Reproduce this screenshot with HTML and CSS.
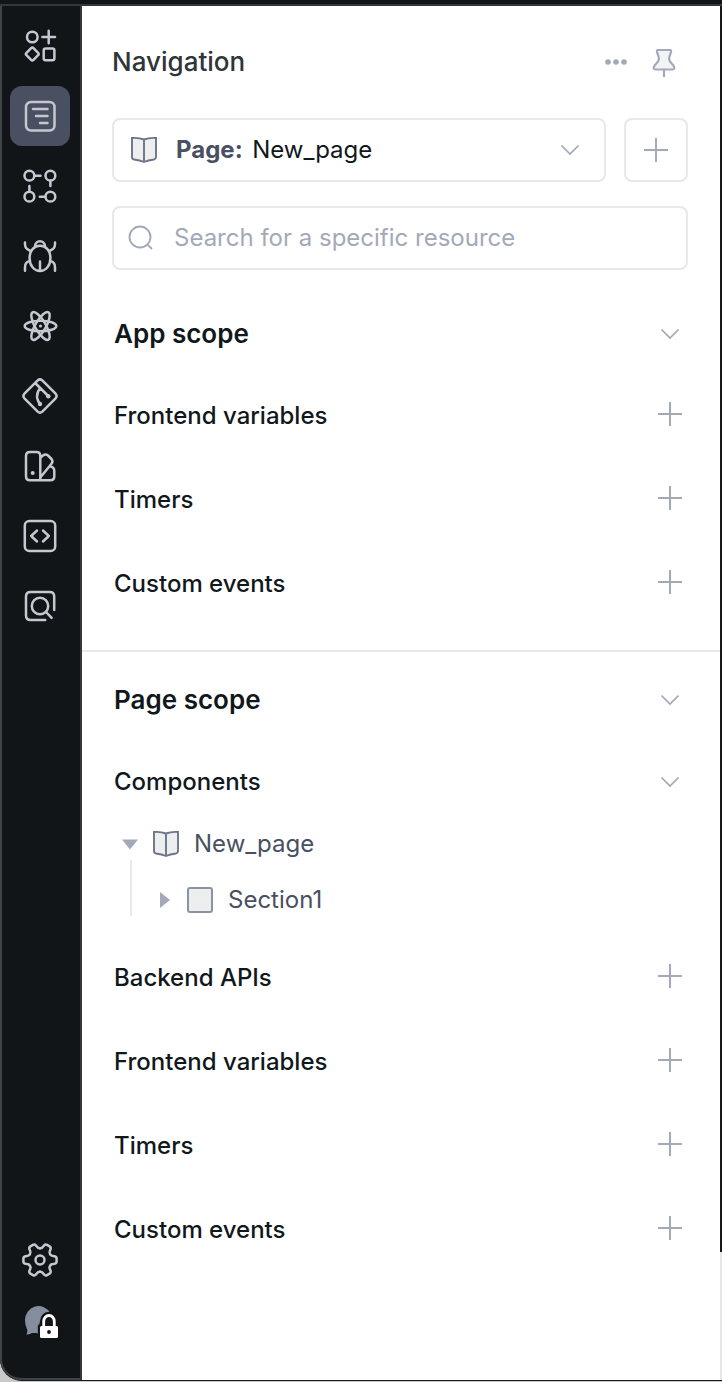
FILE: index.html
```html
<!DOCTYPE html>
<html lang="en">
<head>
<meta charset="utf-8">
<title>Navigation</title>
<link rel="stylesheet" href="styles.css">
</head>
<body>
<svg class="defs" aria-hidden="true">
  <symbol id="plus" viewBox="0 0 24 24"><path d="M12 0V24M0 12H24"/></symbol>
  <symbol id="chevron" viewBox="0 0 24 24"><path d="M3.500 7.500L12 16L20.500 7.500"/></symbol>
  <symbol id="book" viewBox="0 0 28 28"><path d="M2 2Q9 1.500 14 3.500Q19 1.500 26 2V21Q26 23 24 23.500Q18 24.200 14 26Q10 24.200 4 23.500Q2 23 2 21ZM14 3.500V26"/></symbol>
  <symbol id="tooth" viewBox="0 0 36 36" overflow="visible"><path d="M28.100 12.200Q29 14 31 14L32.500 14.200Q34.600 14.700 34.600 16.500V19.500Q34.600 21.300 32.500 21.800L31 22Q29 22 28.100 23.800"/></symbol>
</svg>
<div class="app">
  <div class="topbar"></div>
  <div class="main">
    <nav class="rail">
      <a class="tool"><svg class="icon" viewBox="0 0 36 36"><circle cx="10.300" cy="9" r="5.300"/><path d="M26.700 2.700V15.300M20.400 9H33"/><path d="M9.100 20.200Q10.300 19 11.500 20.200L16.100 24.800Q17.300 26 16.100 27.200L11.500 31.800Q10.300 33 9.100 31.800L4.500 27.200Q3.300 26 4.500 24.800Z"/><rect x="21.700" y="20.500" width="10.700" height="11.700" rx="2"/></svg></a>
      <a class="tool active"><svg class="icon" viewBox="0 0 36 36"><rect x="4" y="4" width="28.500" height="28.500" rx="5"/><path d="M11 11H25.500M14 18H25.500M18 25H25.500"/></svg></a>
      <a class="tool"><svg class="icon" viewBox="0 0 36 36"><circle cx="7.400" cy="7.700" r="4.900"/><circle cx="28.400" cy="7.700" r="4.900"/><circle cx="7.400" cy="28.700" r="4.900"/><circle cx="28.400" cy="28.700" r="4.900"/><path d="M12.500 7.700H18.500M28.400 12.700V18M7.400 23.500V18M23.300 28.700H17.800"/></svg></a>
      <a class="tool"><svg class="icon" viewBox="0 0 36 36"><path d="M18 7.800C24 7.800 28.400 12.500 28.400 20S24 33 18 33S7.600 27.500 7.600 20S12 7.800 18 7.800ZM13 8.500C13 1.500 23 1.500 23 8.500M18 23.500V33M3 4.500V6.500Q3 11 8.800 13M33 4.500V6.500Q33 11 27.200 13M3 32.800V29Q3 24 7.800 23M33 32.800V29Q33 24 28.200 23"/></svg></a>
      <a class="tool"><svg class="icon" viewBox="0 0 36 36"><ellipse cx="18.500" cy="18" rx="15.800" ry="5.300"/><ellipse cx="18.500" cy="18" rx="15.800" ry="5.300" transform="rotate(60 18.500 18)"/><ellipse cx="18.500" cy="18" rx="15.800" ry="5.300" transform="rotate(120 18.500 18)"/><circle class="dot" cx="18.500" cy="18" r="1.600"/></svg></a>
      <a class="tool"><svg class="icon" viewBox="0 0 36 36"><path d="M15.700 2.400Q18 .4 20.300 2.400L33.600 15.700Q35.600 18 33.600 20.300L20.300 33.600Q18 35.600 15.700 33.600L2.400 20.300Q.4 18 2.400 15.700ZM13.200 5L26.200 18M18.200 10Q14.500 14.500 15.200 20Q15.700 23 18 26"/><circle class="dot" cx="26.300" cy="18.200" r="2.200"/><circle class="dot" cx="18" cy="26" r="2.200"/></svg></a>
      <a class="tool"><svg class="icon" viewBox="0 0 36 36"><path d="M8 4H14.500Q18.300 4 18.300 8V32.200H8Q4 32.200 4 28.200V8Q4 4 8 4ZM18.300 9.800L21 7.500Q23.500 5.500 26 7.500L29.500 11Q31.500 13.500 29.300 16L18.300 29.500M28 18.500Q32.300 18.800 32.300 23V28.200Q32.300 32.200 28.300 32.200H18"/><circle class="dot" cx="10.700" cy="25" r="2"/></svg></a>
      <a class="tool"><svg class="icon" viewBox="0 0 36 36"><rect x="2.800" y="3" width="30.400" height="30" rx="4.500"/><path d="M15 12.500L9.200 18L15 23.500M21 12.500L26.800 18L21 23.500"/></svg></a>
      <a class="tool"><svg class="icon" viewBox="0 0 36 36"><path d="M32.200 22V8.500Q32.200 4 27.700 4H8.500Q4 4 4 8.500V27.500Q4 32 8.500 32H23.200M24 24L29.600 29.800"/><circle cx="18" cy="18" r="8.200"/></svg></a>
      <div class="rail-end">
        <a class="tool"><svg class="icon" viewBox="0 0 36 36"><use href="#tooth"/><use href="#tooth" transform="rotate(60 18 18)"/><use href="#tooth" transform="rotate(120 18 18)"/><use href="#tooth" transform="rotate(180 18 18)"/><use href="#tooth" transform="rotate(240 18 18)"/><use href="#tooth" transform="rotate(300 18 18)"/><circle cx="18" cy="18" r="4.500"/></svg></a>
        <a class="tool"><svg class="chat" viewBox="0 0 36 36"><path class="bubble" d="M4.500 30.300Q5.500 28 5.300 26Q3 21.500 3 16.500A13.600 14 0 0 1 28.500 9.300L29 17L19 21L18 24V29Q16.500 30.500 14.500 29H10Q7 31 4.500 30.300Z"/><path class="gap" d="M15.800 36V21.500Q18 20.500 18 17A8.500 9 0 0 1 35.500 17V21Z"/><rect class="lock" x="18" y="22" width="18" height="12" rx="1.500"/><path class="shackle" d="M21.700 22.500V17.500A5.300 6 0 0 1 32.300 17.500V22.500"/><circle class="hole" cx="27" cy="28" r="1.900"/></svg></a>
      </div>
    </nav>
    <section class="panel">
      <header class="head">
        <h1>Navigation</h1>
        <svg class="more" viewBox="0 0 24 8"><circle cx="4" cy="4" r="2.800"/><circle cx="12" cy="4" r="2.800"/><circle cx="20" cy="4" r="2.800"/></svg>
        <svg class="pin" viewBox="0 0 28 32"><path d="M8 4H20Q21.500 4 21 6L19.500 10.500Q18.300 13 20 15.500L23.500 19.500Q25.500 23.500 22.500 23.500H5.500Q2.500 23.500 4.500 19.500L8 15.500Q9.700 13 8.500 10.500L7 6Q6.500 4 8 4ZM14 24V31"/></svg>
      </header>
      <div class="pages">
        <div class="select"><svg class="book"><use href="#book"/></svg><b>Page:</b><span>New_page</span><svg class="act chevron"><use href="#chevron"/></svg></div>
        <div class="add"><svg class="act"><use href="#plus"/></svg></div>
      </div>
      <div class="search"><svg class="glass" viewBox="0 0 26 26"><circle cx="12" cy="12" r="10.500"/><path d="M19.800 19.800L24 24"/></svg><span>Search for a specific resource</span></div>
      <div class="scope app-scope">
        <div class="row title"><h2>App scope</h2><svg class="act chevron"><use href="#chevron"/></svg></div>
        <div class="row"><h3>Frontend variables</h3><svg class="act"><use href="#plus"/></svg></div>
        <div class="row"><h3>Timers</h3><svg class="act"><use href="#plus"/></svg></div>
        <div class="row"><h3>Custom events</h3><svg class="act"><use href="#plus"/></svg></div>
      </div>
      <div class="scope page-scope">
        <div class="row title"><h2>Page scope</h2><svg class="act chevron"><use href="#chevron"/></svg></div>
        <div class="row components"><h3>Components</h3><svg class="act chevron"><use href="#chevron"/></svg></div>
        <div class="tree">
          <div class="node"><svg class="caret" viewBox="0 0 16 16"><path d="M0 3.500H16L8 13.500Z"/></svg><svg class="book"><use href="#book"/></svg><span>New_page</span></div>
          <div class="branch"><div class="node"><svg class="caret" viewBox="0 0 16 16"><path d="M4 0V16L14 8Z"/></svg><i class="box"></i><span>Section1</span></div></div>
        </div>
        <div class="row"><h3>Backend APIs</h3><svg class="act"><use href="#plus"/></svg></div>
        <div class="row"><h3>Frontend variables</h3><svg class="act"><use href="#plus"/></svg></div>
        <div class="row"><h3>Timers</h3><svg class="act"><use href="#plus"/></svg></div>
        <div class="row"><h3>Custom events</h3><svg class="act"><use href="#plus"/></svg></div>
      </div>
    </section>
    <div class="canvas-edge"><div class="canvas-dark"></div></div>
  </div>
</div>
</body>
</html>
```
FILE: styles.css
```css
* { box-sizing: border-box; }
body { margin: 0; background: #c9c9ca; font-family: Inter, sans-serif; font-size: 24px; }
h1, h2, h3 { margin: 0; white-space: nowrap; }
svg { display: block; flex: none; fill: none; }
.defs { position: absolute; width: 0; height: 0; }
.app { height: 1381px; display: flex; flex-direction: column; background: #111517; border-bottom: 1px solid #17191b; border-bottom-left-radius: 22px; overflow: hidden; }
.topbar { height: 6px; border-bottom: 2px solid #343739; flex: none; }
.main { display: flex; flex: 1; min-height: 0; }
.rail { width: 82px; border-left: 2px solid #414446; border-right: 2px solid #34383a; border-bottom: 2px solid #414446; border-bottom-left-radius: 21px; padding: 10px 10px 0 8px; display: flex; flex-direction: column; gap: 10px; }
.tool { width: 60px; height: 60px; flex: none; display: flex; align-items: center; justify-content: center; border-radius: 12px; }
.active { background: #495062; }
.icon { width: 36px; height: 36px; stroke: #c5c8d1; stroke-width: 2.500; stroke-linecap: round; stroke-linejoin: round; }
.icon .dot { fill: #c5c8d1; stroke: none; }
.rail-end { margin-top: auto; padding-bottom: 26px; display: flex; flex-direction: column; gap: 2px; }
.chat { width: 36px; height: 36px; }
.bubble { fill: #858e9f; }
.gap { fill: #111517; }
.lock { fill: #fff; }
.shackle { stroke: #fff; stroke-width: 2.8; }
.hole { fill: #111517; }
.panel { width: 638px; background: #fff; color: #11181c; display: flex; flex-direction: column; }
.head { height: 112px; padding: 0 42px 0 30px; display: flex; align-items: center; }
h1 { font-size: 26px; font-weight: 500; color: #2f3538; flex: 1; line-height: 32px; }
.more { width: 24px; height: 8px; fill: #a3a9b9; margin-right: 22px; }
.pin { width: 28px; height: 32px; stroke: #a3a9b9; stroke-width: 2.2; fill: #f1f3f5; }
.pages { display: flex; gap: 18px; padding: 0 32px 0 30px; }
.select, .add, .search { height: 64px; border: 2px solid #e8e8ed; border-radius: 8px; display: flex; align-items: center; }
.select { flex: 1; padding: 0 22px 0 16px; }
.select b { margin-left: 18px; font-weight: 700; color: #495062; padding-bottom: 2px; }
.select span { margin-left: 9.500px; flex: 1; padding-bottom: 2px; }
.add { width: 64px; justify-content: center; }
.search { margin: 24px 32px 0 30px; padding-left: 14px; color: #a3a9b9; }
.search span { padding-bottom: 2px; }
.glass { width: 26px; height: 26px; margin-right: 20px; stroke: #a3a9b9; stroke-width: 1.900; }
.act { width: 24px; height: 24px; stroke: #a3a9b9; stroke-width: 2; }
.chevron { stroke-width: 1.700; }
.book { width: 28px; height: 28px; fill: #eceef0; stroke: #6c7489; stroke-width: 1.900; }
.scope { padding: 0 38px 0 32px; }
.app-scope { padding-top: 22px; height: 382px; border-bottom: 2px solid #e8e8ed; }
.row { height: 84px; display: flex; align-items: center; justify-content: space-between; }
.row.title { height: 80px; padding-top: 4px; }
h2 { font-size: 26px; font-weight: 600; padding-bottom: 2px; }
h3 { font-size: 24px; font-weight: 500; padding-top: 2px; }
.page-scope { padding-top: 6px; }
.row.components { height: 78px; padding-top: 10px; }
.components h3 { padding: 0 0 1px; }
.tree { height: 118px; color: #495062; }
.node { height: 56px; display: flex; align-items: center; padding-left: 8px; }
.caret { width: 16px; height: 16px; fill: #a3a9b9; margin-right: 14px; }
.node span { margin-left: 14px; padding-bottom: 1px; }
.branch { margin: -12px 0 0 16px; border-left: 2px solid #e8e8ed; height: 56px; padding-top: 12px; }
.branch .node { padding-left: 24px; }
.box { width: 26px; height: 26px; margin: 0 1px; border: 2px solid #8992a2; border-radius: 3px; background: #eceef0; }
.canvas-edge { width: 2px; background: #e6e6e7; }
.canvas-dark { height: 1246px; background: #15191b; }
```
